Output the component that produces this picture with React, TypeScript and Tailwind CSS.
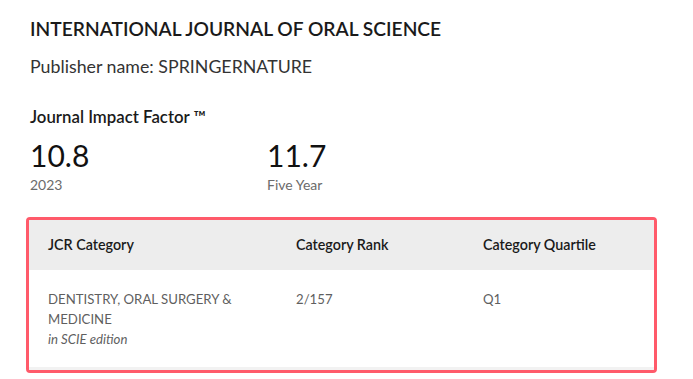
export default function App() {
  return (
    <div className="min-h-screen bg-white pl-[30px] pr-[36px] pt-[16px] text-[#222] font-['Lato','Liberation_Sans',sans-serif]">
      <h1 className="text-[19.2px] leading-[26px] font-semibold text-[#1a1a1a]">INTERNATIONAL JOURNAL OF ORAL SCIENCE</h1>
      <p className="mt-[12px] text-[17.8px] leading-[24px] text-[#333]">Publisher name: SPRINGERNATURE</p>

      <h2 className="mt-[29px] text-[16.8px] leading-[20px] font-semibold text-[#1a1a1a]">Journal Impact Factor ™</h2>
      <div className="mt-[10px] flex">
        <div className="w-[237px]">
          <div className="text-[30px] leading-[36px] text-[#111]">10.8</div>
          <div className="mt-[3px] text-[14px] leading-[18px] text-[#6b6b6b]">2023</div>
        </div>
        <div>
          <div className="text-[30px] leading-[36px] text-[#111]">11.7</div>
          <div className="mt-[3px] text-[14px] leading-[18px] text-[#6b6b6b]">Five Year</div>
        </div>
      </div>

      {/* JCR category table */}
      <div className="mt-[23px] -ml-[4px] w-[631px] border-[3px] border-[#ff5a6a] rounded-[4px] overflow-hidden">
        <div className="grid grid-cols-[248px_187px_1fr] bg-[#ededed] h-[50px] items-center text-[14.3px] font-semibold text-[#1a1a1a]">
          <div className="pl-[19px]">JCR Category</div>
          <div className="pl-[19px]">Category Rank</div>
          <div className="pl-[19px]">Category Quartile</div>
        </div>
        <div className="grid grid-cols-[248px_187px_1fr] pt-[19px] pb-[18px] border-b-[3px] border-[#f2f2f2] text-[13.2px] leading-[20px] text-[#5f5f5f]">
          <div className="pl-[19px]">
            <div>DENTISTRY, ORAL SURGERY &amp; MEDICINE</div>
            <div className="italic">in SCIE edition</div>
          </div>
          <div className="pl-[19px]">2/157</div>
          <div className="pl-[19px]">Q1</div>
        </div>
      </div>
    </div>
  );
}
